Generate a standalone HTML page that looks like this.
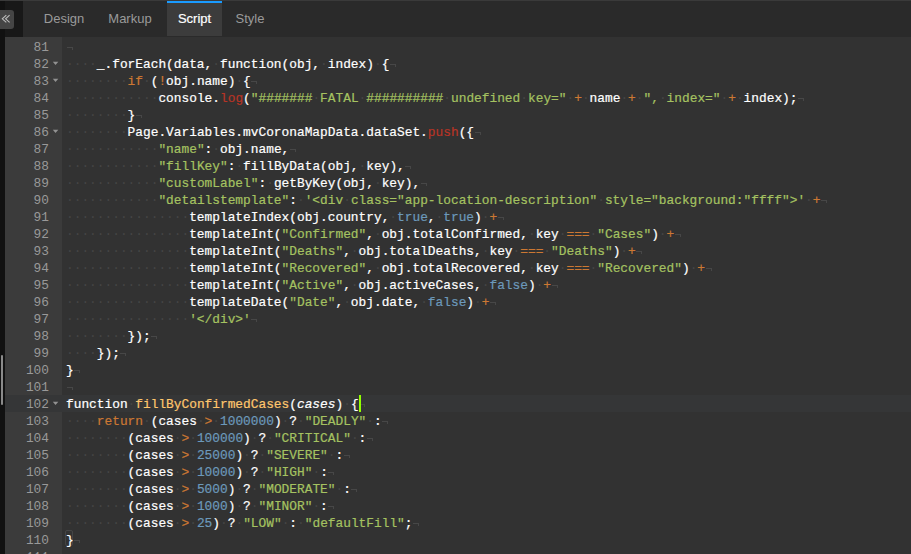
<!DOCTYPE html>
<html><head><meta charset="utf-8">
<style>
html,body{margin:0;padding:0;width:911px;height:554px;overflow:hidden;background:#2a2a2a}
body{position:relative;font-family:"Liberation Sans",sans-serif}
#topline{position:absolute;left:0;top:0;width:911px;height:1px;background:#3a3a3a}
#tabbar{position:absolute;left:23px;top:1px;width:888px;height:36px;background:#2a2a2a}
#lstrip{position:absolute;left:0;top:1px;width:23px;height:36px;background:#181818}
#lstrip2{position:absolute;left:0;top:1px;width:5px;height:553px;background:#111}
#collapse{position:absolute;left:0;top:10px;width:14px;height:19px;background:#454545;border-radius:0 3px 3px 0}
#collapse svg{position:absolute;left:0;top:0}
.tab{position:absolute;top:1px;height:35px;font-size:13px;line-height:35px;color:#9a9a9a}
.tab.on{background:#3c3c3c;color:#fff;-webkit-text-stroke:0.2px #fff}
.tab.on:before{content:"";position:absolute;left:0;top:0;right:0;height:2px;background:#1a9bff}
#gutter{position:absolute;left:5px;top:37px;width:57px;height:517px;background:#3b3b3b}
#editor{position:absolute;left:62px;top:37px;width:849px;height:517px;background:#323232}
.ln,.gn{position:absolute;height:17px;line-height:17px;font-family:"Liberation Mono",monospace;font-size:12.83px;white-space:pre}
.ln{left:66px;right:0;color:#fff;-webkit-text-stroke:0.2px currentColor}
.gn{left:5px;width:57px;color:#999;text-align:right;box-sizing:border-box;padding-right:13px}
.fw{position:absolute;left:47px;top:5px}
.inv{color:#454545;-webkit-text-stroke:0}
.kw{color:#CC7833}
.num{color:#6C99BB}
.sup{color:#B83426}
.str{color:#A5C261}
.fn{color:#FFC66D}
.par{font-style:italic}
#cursor{position:absolute;left:359px;top:395px;width:2px;height:17px;background:#91FF00}
.eol{position:absolute;width:5px;height:2px;border-top:1px solid #474747;border-right:1px solid #474747}
#sb{position:absolute;left:1px;top:355px;width:2px;height:50px;background:#8a8a8a;border-radius:1px}
</style></head><body>
<div id="topline"></div>
<div id="lstrip"></div>
<div id="tabbar"></div>
<div id="lstrip2"></div>
<div id="collapse"><svg width="14" height="19" viewBox="0 0 14 19"><path d="M6.3 5.2L2.3 8.8L6.3 12.4M9.6 5.2L5.6 8.8L9.6 12.4" fill="none" stroke="#bdbdbd" stroke-width="1.05"/></svg></div>
<div class="tab" style="left:31px;width:66px;text-align:center">Design</div>
<div class="tab" style="left:95px;width:70px;text-align:center">Markup</div>
<div class="tab on" style="left:167px;width:55px;text-align:center">Script</div>
<div class="tab" style="left:222px;width:56px;text-align:center">Style</div>
<div id="gutter"></div>
<div id="editor"></div>
<div style="position:absolute;left:5px;top:395px;width:906px;height:17px;background:#353637"></div>
<div style="position:absolute;left:65px;top:530px;width:8px;height:16px;box-sizing:border-box;border:1px solid #454545;border-radius:2px"></div>
<div class="gn" style="top:39px">81</div>
<div class="gn" style="top:56px">82<svg class="fw" width="8" height="6"><path d="M0.8 0.8H6.3L3.55 4z" fill="#929292"/></svg></div>
<div class="gn" style="top:73px">83<svg class="fw" width="8" height="6"><path d="M0.8 0.8H6.3L3.55 4z" fill="#929292"/></svg></div>
<div class="gn" style="top:90px">84</div>
<div class="gn" style="top:107px">85</div>
<div class="gn" style="top:124px">86<svg class="fw" width="8" height="6"><path d="M0.8 0.8H6.3L3.55 4z" fill="#929292"/></svg></div>
<div class="gn" style="top:141px">87</div>
<div class="gn" style="top:158px">88</div>
<div class="gn" style="top:175px">89</div>
<div class="gn" style="top:192px">90</div>
<div class="gn" style="top:209px">91</div>
<div class="gn" style="top:226px">92</div>
<div class="gn" style="top:243px">93</div>
<div class="gn" style="top:260px">94</div>
<div class="gn" style="top:277px">95</div>
<div class="gn" style="top:294px">96</div>
<div class="gn" style="top:311px">97</div>
<div class="gn" style="top:328px">98</div>
<div class="gn" style="top:345px">99</div>
<div class="gn" style="top:362px">100</div>
<div class="gn" style="top:379px">101</div>
<div class="gn act" style="top:396px">102<svg class="fw" width="8" height="6"><path d="M0.8 0.8H6.3L3.55 4z" fill="#929292"/></svg></div>
<div class="gn" style="top:413px">103</div>
<div class="gn" style="top:430px">104</div>
<div class="gn" style="top:447px">105</div>
<div class="gn" style="top:464px">106</div>
<div class="gn" style="top:481px">107</div>
<div class="gn" style="top:498px">108</div>
<div class="gn" style="top:515px">109</div>
<div class="gn" style="top:532px">110</div>
<div class="gn" style="top:549px">111</div>
<div class="ln" style="top:39px"></div>
<div class="ln" style="top:56px"><span class="inv">····</span>_.forEach(data,<span class="inv">·</span>function(obj,<span class="inv">·</span>index)<span class="inv">·</span>{</div>
<div class="ln" style="top:73px"><span class="inv">········</span><span class="kw">if</span><span class="inv">·</span>(<span class="kw">!</span>obj.name)<span class="inv">·</span>{</div>
<div class="ln" style="top:90px"><span class="inv">············</span>console.<span class="sup">log</span>(<span class="str">"#######<span class="inv">·</span>FATAL<span class="inv">·</span>##########<span class="inv">·</span>undefined<span class="inv">·</span>key="</span><span class="inv">·</span><span class="kw">+</span><span class="inv">·</span>name<span class="inv">·</span><span class="kw">+</span><span class="inv">·</span><span class="str">",<span class="inv">·</span>index="</span><span class="inv">·</span><span class="kw">+</span><span class="inv">·</span>index);</div>
<div class="ln" style="top:107px"><span class="inv">········</span>}</div>
<div class="ln" style="top:124px"><span class="inv">········</span>Page.Variables.mvCoronaMapData.dataSet.<span class="sup">push</span>({</div>
<div class="ln" style="top:141px"><span class="inv">············</span><span class="str">"name"</span>:<span class="inv">·</span>obj.name,</div>
<div class="ln" style="top:158px"><span class="inv">············</span><span class="str">"fillKey"</span>:<span class="inv">·</span>fillByData(obj,<span class="inv">·</span>key),</div>
<div class="ln" style="top:175px"><span class="inv">············</span><span class="str">"customLabel"</span>:<span class="inv">·</span>getByKey(obj,<span class="inv">·</span>key),</div>
<div class="ln" style="top:192px"><span class="inv">············</span><span class="str">"detailstemplate"</span>:<span class="inv">·</span><span class="str">'&lt;div<span class="inv">·</span>class="app-location-description"<span class="inv">·</span>style="background:"ffff"&gt;'</span><span class="inv">·</span><span class="kw">+</span></div>
<div class="ln" style="top:209px"><span class="inv">················</span>templateIndex(obj.country,<span class="inv">·</span><span class="num">true</span>,<span class="inv">·</span><span class="num">true</span>)<span class="inv">·</span><span class="kw">+</span></div>
<div class="ln" style="top:226px"><span class="inv">················</span>templateInt(<span class="str">"Confirmed"</span>,<span class="inv">·</span>obj.totalConfirmed,<span class="inv">·</span>key<span class="inv">·</span><span class="kw">===</span><span class="inv">·</span><span class="str">"Cases"</span>)<span class="inv">·</span><span class="kw">+</span></div>
<div class="ln" style="top:243px"><span class="inv">················</span>templateInt(<span class="str">"Deaths"</span>,<span class="inv">·</span>obj.totalDeaths,<span class="inv">·</span>key<span class="inv">·</span><span class="kw">===</span><span class="inv">·</span><span class="str">"Deaths"</span>)<span class="inv">·</span><span class="kw">+</span></div>
<div class="ln" style="top:260px"><span class="inv">················</span>templateInt(<span class="str">"Recovered"</span>,<span class="inv">·</span>obj.totalRecovered,<span class="inv">·</span>key<span class="inv">·</span><span class="kw">===</span><span class="inv">·</span><span class="str">"Recovered"</span>)<span class="inv">·</span><span class="kw">+</span></div>
<div class="ln" style="top:277px"><span class="inv">················</span>templateInt(<span class="str">"Active"</span>,<span class="inv">·</span>obj.activeCases,<span class="inv">·</span><span class="num">false</span>)<span class="inv">·</span><span class="kw">+</span></div>
<div class="ln" style="top:294px"><span class="inv">················</span>templateDate(<span class="str">"Date"</span>,<span class="inv">·</span>obj.date,<span class="inv">·</span><span class="num">false</span>)<span class="inv">·</span><span class="kw">+</span></div>
<div class="ln" style="top:311px"><span class="inv">················</span><span class="str">'&lt;/div&gt;'</span></div>
<div class="ln" style="top:328px"><span class="inv">········</span>});</div>
<div class="ln" style="top:345px"><span class="inv">····</span>});</div>
<div class="ln" style="top:362px">}</div>
<div class="ln" style="top:379px"></div>
<div class="ln act" style="top:396px">function<span class="inv">·</span><span class="fn">fillByConfirmedCases</span>(<span class="par">cases</span>)<span class="inv">·</span>{</div>
<div class="ln" style="top:413px"><span class="inv">····</span><span class="kw">return</span><span class="inv">·</span>(cases<span class="inv">·</span><span class="kw">&gt;</span><span class="inv">·</span><span class="num">1000000</span>)<span class="inv">·</span>?<span class="inv">·</span><span class="str">"DEADLY"</span><span class="inv">·</span>:</div>
<div class="ln" style="top:430px"><span class="inv">········</span>(cases<span class="inv">·</span><span class="kw">&gt;</span><span class="inv">·</span><span class="num">100000</span>)<span class="inv">·</span>?<span class="inv">·</span><span class="str">"CRITICAL"</span><span class="inv">·</span>:</div>
<div class="ln" style="top:447px"><span class="inv">········</span>(cases<span class="inv">·</span><span class="kw">&gt;</span><span class="inv">·</span><span class="num">25000</span>)<span class="inv">·</span>?<span class="inv">·</span><span class="str">"SEVERE"</span><span class="inv">·</span>:</div>
<div class="ln" style="top:464px"><span class="inv">········</span>(cases<span class="inv">·</span><span class="kw">&gt;</span><span class="inv">·</span><span class="num">10000</span>)<span class="inv">·</span>?<span class="inv">·</span><span class="str">"HIGH"</span><span class="inv">·</span>:</div>
<div class="ln" style="top:481px"><span class="inv">········</span>(cases<span class="inv">·</span><span class="kw">&gt;</span><span class="inv">·</span><span class="num">5000</span>)<span class="inv">·</span>?<span class="inv">·</span><span class="str">"MODERATE"</span><span class="inv">·</span>:</div>
<div class="ln" style="top:498px"><span class="inv">········</span>(cases<span class="inv">·</span><span class="kw">&gt;</span><span class="inv">·</span><span class="num">1000</span>)<span class="inv">·</span>?<span class="inv">·</span><span class="str">"MINOR"</span><span class="inv">·</span>:</div>
<div class="ln" style="top:515px"><span class="inv">········</span>(cases<span class="inv">·</span><span class="kw">&gt;</span><span class="inv">·</span><span class="num">25</span>)<span class="inv">·</span>?<span class="inv">·</span><span class="str">"LOW"</span><span class="inv">·</span>:<span class="inv">·</span><span class="str">"defaultFill"</span>;</div>
<div class="ln" style="top:532px">}</div>
<div class="ln" style="top:549px"></div>
<div class="eol" style="left:66.5px;top:47px"></div>
<div class="eol" style="left:389.9px;top:64px"></div>
<div class="eol" style="left:251.3px;top:81px"></div>
<div class="eol" style="left:798.0px;top:98px"></div>
<div class="eol" style="left:135.8px;top:115px"></div>
<div class="eol" style="left:474.6px;top:132px"></div>
<div class="eol" style="left:289.8px;top:149px"></div>
<div class="eol" style="left:405.3px;top:166px"></div>
<div class="eol" style="left:420.7px;top:183px"></div>
<div class="eol" style="left:821.1px;top:200px"></div>
<div class="eol" style="left:497.7px;top:217px"></div>
<div class="eol" style="left:674.8px;top:234px"></div>
<div class="eol" style="left:636.3px;top:251px"></div>
<div class="eol" style="left:705.6px;top:268px"></div>
<div class="eol" style="left:551.6px;top:285px"></div>
<div class="eol" style="left:490.0px;top:302px"></div>
<div class="eol" style="left:251.3px;top:319px"></div>
<div class="eol" style="left:151.2px;top:336px"></div>
<div class="eol" style="left:120.4px;top:353px"></div>
<div class="eol" style="left:74.2px;top:370px"></div>
<div class="eol" style="left:66.5px;top:387px"></div>
<div class="eol" style="left:359.1px;top:404px"></div>
<div class="eol" style="left:382.2px;top:421px"></div>
<div class="eol" style="left:366.8px;top:438px"></div>
<div class="eol" style="left:343.7px;top:455px"></div>
<div class="eol" style="left:328.3px;top:472px"></div>
<div class="eol" style="left:351.4px;top:489px"></div>
<div class="eol" style="left:328.3px;top:506px"></div>
<div class="eol" style="left:413.0px;top:523px"></div>
<div class="eol" style="left:74.2px;top:540px"></div>
<div class="eol" style="left:66.5px;top:557px"></div>
<div id="cursor"></div>
<div id="sb"></div>
</body></html>
